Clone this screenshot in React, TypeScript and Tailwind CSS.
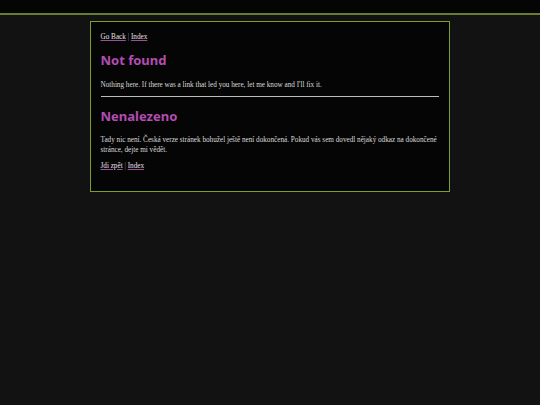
export default function App() {
  const serif = { fontFamily: '"Liberation Serif", "DejaVu Serif", serif' };
  const sans = { fontFamily: '"Noto Sans", "DejaVu Sans", sans-serif' };
  return (
    <div className="min-h-[405px] w-[540px] bg-[#121212] antialiased" style={serif}>
      <div className="h-[13px] bg-[#050505]" />
      <div className="h-[2px] bg-[#6b7d35]" />
      <div className="pt-[6px] flex justify-center">
        <div className="ml-[-1px] w-[360px] h-[171px] border border-[#7c9e2e] bg-[#050505] px-[10px] pt-[9px] text-[7.2px] leading-[10px] text-[#dcdcdc]">
          <div className="mt-[1px]">
            <a className="underline decoration-[#9a509a] text-[#e8e0e8]">Go Back</a>
            <span className="text-[#888]"> | </span>
            <a className="underline decoration-[#9a509a] text-[#e8e0e8]">Index</a>
          </div>
          <h1 className="mt-[10px] text-[13px] leading-[17px] font-bold text-[#b34db3]" style={sans}>Not found</h1>
          <p className="mt-[11px]">Nothing here. If there was a link that led you here, let me know and I'll fix it.</p>
          <div className="mt-[6px] h-[1px] bg-[#bdbdbd]" />
          <h1 className="mt-[11px] text-[13px] leading-[17px] font-bold text-[#b34db3]" style={sans}>Nenalezeno</h1>
          <p className="mt-[11px] leading-[9.5px]">Tady nic není. Česká verze stránek bohužel ještě není dokončená. Pokud vás sem dovedl nějaký odkaz na dokončené stránce, dejte mi vědět.</p>
          <div className="mt-[6px]">
            <a className="underline decoration-[#9a509a] text-[#e8e0e8]">Jdi zpět</a>
            <span className="text-[#888]"> | </span>
            <a className="underline decoration-[#9a509a] text-[#e8e0e8]">Index</a>
          </div>
        </div>
      </div>
    </div>
  );
}
